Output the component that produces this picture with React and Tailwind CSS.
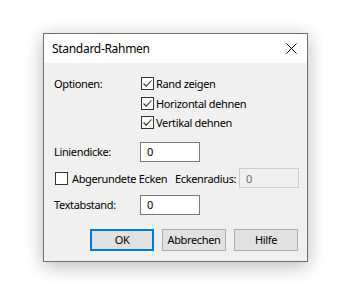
const font = { fontFamily: '"Segoe UI", "Noto Sans", "Open Sans", sans-serif' }

function Check({ checked }) {
  return (
    <span className="w-[13px] h-[13px] border border-[#333333] bg-white flex items-center justify-center shrink-0">
      {checked && (
        <svg width="11" height="11" viewBox="0 0 11 11" fill="none">
          <path d="M1.5 5.5 L4.2 8.2 L9.5 2.5" stroke="#333333" strokeWidth="1.1" />
        </svg>
      )}
    </span>
  )
}

function CheckRow({ label, checked = true }) {
  return (
    <div className="flex items-center gap-[2px] h-[19.5px]">
      <Check checked={checked} />
      <span>{label}</span>
    </div>
  )
}

function Field({ value, disabled }) {
  return (
    <div
      className={`w-[60px] h-[20px] border flex items-center pl-[6px] ${
        disabled ? 'border-[#cccccc] bg-[#f0f0f0] text-[#6d6d6d]' : 'border-[#7a7a7a] bg-white text-black'
      }`}
    >
      {value}
    </div>
  )
}

function Button({ children, primary }) {
  return (
    <div
      className={`w-[64px] h-[22px] bg-[#e1e1e1] flex items-center justify-center ${
        primary ? 'border-2 border-[#0078d7]' : 'border border-[#adadad]'
      }`}
    >
      {children}
    </div>
  )
}

export default function App() {
  return (
    <div
      className="w-[359px] h-[294px] bg-white pl-[43px] pt-[33px] text-[11px] tracking-[-0.35px] whitespace-nowrap text-black leading-none"
      style={font}
    >
      <div className="w-[265px] h-[229px] border border-[#6f6f6f] bg-[#f0f0f0] flex flex-col shadow-[0_4px_18px_rgba(0,0,0,0.28)]">
        <div className="h-[29px] bg-white flex items-center justify-between pl-[8px] pr-[10px]">
          <span className="text-[12px] tracking-[-0.3px]">Standard-Rahmen</span>
          <svg width="11" height="11" viewBox="0 0 11 11">
            <path d="M0.5 0.5 L10.5 10.5 M10.5 0.5 L0.5 10.5" stroke="#000" strokeWidth="1" />
          </svg>
        </div>

        <div className="flex flex-col pl-[10px] pt-[11px]">
          <div className="flex">
            <div className="w-[87px] h-[19.5px] flex items-center">Optionen:</div>
            <div className="flex flex-col">
              <CheckRow label="Rand zeigen" />
              <CheckRow label="Horizontal dehnen" />
              <CheckRow label="Vertikal dehnen" />
            </div>
          </div>

          <div className="flex items-center mt-[9px]">
            <div className="w-[86px]">Liniendicke:</div>
            <Field value="0" />
          </div>

          <div className="flex items-center mt-[6px] h-[21px]">
            <div className="w-[121px] flex items-center gap-[4px] pl-[1px]">
              <Check />
              <span>Abgerundete Ecken</span>
            </div>
            <div className="w-[64px]">Eckenradius:</div>
            <Field value="0" disabled />
          </div>

          <div className="flex items-center mt-[6px]">
            <div className="w-[86px]">Textabstand:</div>
            <Field value="0" />
          </div>

          <div className="flex gap-[8px] mt-[14px] pl-[36px]">
            <Button primary>OK</Button>
            <Button>Abbrechen</Button>
            <Button>Hilfe</Button>
          </div>
        </div>
      </div>
    </div>
  )
}
